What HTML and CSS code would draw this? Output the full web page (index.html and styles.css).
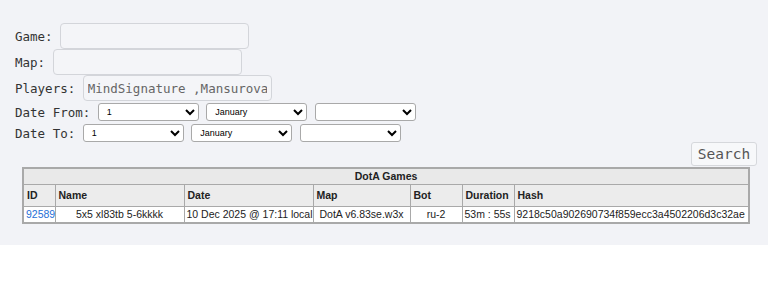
FILE: index.html
```html
<!DOCTYPE html>
<html lang="en">
<head>
  <meta charset="UTF-8">
  <title>DotA Games</title>
  <link rel="stylesheet" href="styles.css">
</head>
<body>

  <div class="page">
    <!-- Form pencarian -->
    <form class="search" onsubmit="return false">
      <div class="row">
        <label>Game:</label>
        <input type="text" name="game">
      </div>
      <div class="row">
        <label>Map:</label>
        <input type="text" name="map">
      </div>
      <div class="row">
        <label>Players:</label>
        <input type="text" name="players" value="MindSignature ,Mansurova">
      </div>
      <div class="row date">
        <label>Date From:</label>
        <select name="fromDay"><option>1</option><option>2</option></select>
        <select name="fromMonth"><option>January</option><option>February</option></select>
        <select name="fromYear"><option></option><option>2025</option></select>
      </div>
      <div class="row date">
        <label>Date To:</label>
        <select name="toDay"><option>1</option><option>2</option></select>
        <select name="toMonth"><option>January</option><option>February</option></select>
        <select name="toYear"><option></option><option>2025</option></select>
      </div>
      <div class="actions">
        <button class="btn" type="submit">Search</button>
      </div>
    </form>

    <!-- Tabel hasil -->
    <div class="results">
      <table class="games">
        <colgroup>
          <col class="c-id">
          <col class="c-name">
          <col class="c-date">
          <col class="c-map">
          <col class="c-bot">
          <col class="c-dur">
          <col class="c-hash">
        </colgroup>
        <tr class="title">
          <th colspan="7">DotA Games</th>
        </tr>
        <tr class="head">
          <th>ID</th>
          <th>Name</th>
          <th>Date</th>
          <th>Map</th>
          <th>Bot</th>
          <th>Duration</th>
          <th>Hash</th>
        </tr>
        <tr>
          <td><a href="#">92589</a></td>
          <td class="center">5x5 xl83tb 5-6kkkk</td>
          <td>10 Dec 2025 @ 17:11 local</td>
          <td class="center">DotA v6.83se.w3x</td>
          <td class="center">ru-2</td>
          <td>53m : 55s</td>
          <td>9218c50a902690734f859ecc3a4502206d3c32ae</td>
        </tr>
      </table>
    </div>
  </div>

</body>
</html>
```

FILE: styles.css
```css
* { margin: 0; padding: 0; box-sizing: border-box; }

body {
  background: #fff;
  font-family: 'DejaVu Sans Mono', monospace;
  font-size: 12.5px;
  color: #333;
}

.page {
  background: #f2f3f7;
  height: 245px;
  padding: 23px 11px 0 15px;
}

.row { display: flex; align-items: center; height: 26px; }

.row label { margin-right: 7.5px; white-space: pre; }

.row input {
  width: 189px; height: 26px;
  padding: 0 4px;
  border: 1px solid #d3d5da; border-radius: 4px;
  background: #f4f5f8;
  font-family: 'DejaVu Sans Mono', monospace; font-size: 12.5px;
  color: #666; outline: none;
}

.row.date { height: 21px; padding-top: 1px; }

.row.date select {
  width: 101px; height: 18px;
  margin-right: 7.5px;
  padding-left: 4px;
  border: 1px solid #a9a9a9; border-radius: 3px;
  background: #fff;
  font-family: 'Liberation Sans', Arial, sans-serif; font-size: 9px;
  color: #000;
}

.actions { display: flex; justify-content: flex-end; margin-top: -1px; }

.btn {
  width: 66px; height: 24px;
  border: 1px solid #d6d8dc; border-radius: 3px;
  background: #f7f8fa;
  font-family: 'DejaVu Sans Mono', monospace; font-size: 14.5px;
  color: #555; cursor: pointer;
}

.results { padding: 0 7px; margin-top: 1px; }

.games {
  width: 726px;
  table-layout: fixed;
  border-collapse: collapse;
  border: 2px solid #a9a9a9;
  font-family: 'Liberation Sans', Arial, sans-serif;
  font-size: 10.5px;
  color: #222;
}

.c-id { width: 32px; }
.c-name { width: 129px; }
.c-date { width: 129px; }
.c-map { width: 97px; }
.c-bot { width: 52px; }
.c-dur { width: 52px; }
.c-hash { width: 235px; }

.games th, .games td {
  border: 1px solid #a9a9a9;
  padding: 0 2px;
  height: 17px;
  line-height: 12px;
  text-align: left;
  white-space: nowrap;
  overflow: hidden;
}

.games .title th { background: #e9e9e9; text-align: center; height: 16px; }

.games .head th { background: #ececec; height: 22px; padding: 0 3px; }

.games td { background: #fff; }

.games td.center { text-align: center; }

.games a { color: #1f6fd6; text-decoration: none; }
```
